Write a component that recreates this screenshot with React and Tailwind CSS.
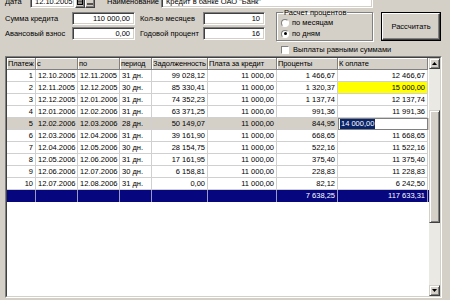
import React from 'react';

const rows = [
  ['1', '12.10.2005', '12.11.2005', '31 дн.', '99 028,12', '11 000,00', '1 466,67', '12 466,67'],
  ['2', '12.11.2005', '12.12.2005', '30 дн.', '85 330,41', '11 000,00', '1 320,37', '15 000,00'],
  ['3', '12.12.2005', '12.01.2006', '31 дн.', '74 352,23', '11 000,00', '1 137,74', '12 137,74'],
  ['4', '12.01.2006', '12.02.2006', '31 дн.', '63 371,25', '11 000,00', '991,36', '11 991,36'],
  ['5', '12.02.2006', '12.03.2006', '28 дн.', '50 149,07', '11 000,00', '844,95', '14 000,00'],
  ['6', '12.03.2006', '12.04.2006', '31 дн.', '39 161,90', '11 000,00', '668,65', '11 668,65'],
  ['7', '12.04.2006', '12.05.2006', '30 дн.', '28 154,75', '11 000,00', '522,16', '11 522,16'],
  ['8', '12.05.2006', '12.06.2006', '31 дн.', '17 161,95', '11 000,00', '375,40', '11 375,40'],
  ['9', '12.06.2006', '12.07.2006', '30 дн.', '6 158,81', '11 000,00', '228,83', '11 228,83'],
  ['10', '12.07.2006', '12.08.2006', '31 дн.', '0,00', '11 000,00', '82,12', '6 242,50'],
];

const headers = ['Платеж', 'с', 'по', 'период', 'Задолженность', 'Плата за кредит', 'Проценты', 'К оплате'];
const leftCols = [1, 2, 3];

const cols = 'grid grid-cols-[29px_42px_42px_32px_56px_69px_61px_90px]';

const Edit = ({ className = '', right, children }) => (
  <div
    className={`h-[13px] bg-white border border-t-[#808080] border-l-[#808080] border-r-white border-b-white shadow-[inset_1px_1px_0_#404040,inset_-1px_-1px_0_#d4d0c8] flex items-center px-[4px] whitespace-nowrap overflow-hidden ${right ? 'justify-end' : ''} ${className}`}
  >
    {children}
  </div>
);

const SmallBtn = ({ children }) => (
  <div className="w-[10px] h-[13px] bg-[#d4d0c8] border border-t-white border-l-white border-r-[#404040] border-b-[#404040] shadow-[inset_-1px_-1px_0_#808080] flex items-center justify-center">
    {children}
  </div>
);

const Radio = ({ checked }) => (
  <span className="w-[8px] h-[8px] rounded-full bg-white border border-t-[#808080] border-l-[#808080] border-r-white border-b-white flex items-center justify-center shrink-0">
    {checked && <span className="w-[3px] h-[3px] rounded-full bg-black" />}
  </span>
);

const ScrollBtn = ({ down }) => (
  <div className="h-[11px] bg-[#d4d0c8] border border-t-[#d4d0c8] border-l-[#d4d0c8] border-r-[#404040] border-b-[#404040] shadow-[inset_1px_1px_0_white,inset_-1px_-1px_0_#808080] flex items-center justify-center">
    <svg width="5" height="3" viewBox="0 0 5 3">
      {down ? <path d="M0 0h5L2.5 3z" fill="#000" /> : <path d="M0 3h5L2.5 0z" fill="#000" />}
    </svg>
  </div>
);

export default function App() {
  return (
    <div className="w-[450px] h-[300px] overflow-hidden bg-[#d4d0c8] text-black text-[7.5px] leading-none font-['Liberation_Sans',Arial,sans-serif]">
      {/* top line, partly cut off */}
      <div className="flex items-center h-[13px] mt-[-5px]">
        <span className="w-[30px] pl-[5px]">Дата</span>
        <Edit className="w-[45px]">12.10.2005</Edit>
        <SmallBtn>
          <svg width="6" height="6" viewBox="0 0 6 6">
            <rect x="0.5" y="0.5" width="5" height="5" fill="none" stroke="#000" strokeWidth="1" />
            <path d="M0 2h6M2 2v4M4 2v4" stroke="#000" strokeWidth="0.7" />
          </svg>
        </SmallBtn>
        <SmallBtn>
          <svg width="6" height="6" viewBox="0 0 6 6">
            <path d="M0 5h6" stroke="#000" strokeWidth="1.2" />
          </svg>
        </SmallBtn>
        <span className="ml-[12px] w-[54px] whitespace-nowrap">Наименование</span>
        <Edit className="w-[212px]">Кредит в банке ОАО "Банк"</Edit>
      </div>

      <div className="flex items-start mt-[4px]">
        <div className="flex flex-col gap-[2px]">
          <div className="flex items-center">
            <span className="w-[72px] pl-[5px] whitespace-nowrap">Сумма кредита</span>
            <Edit className="w-[63px]" right>110 000,00</Edit>
            <span className="w-[68px] pl-[5px] whitespace-nowrap">Кол-во месяцев</span>
            <Edit className="w-[62px]" right>10</Edit>
          </div>
          <div className="flex items-center">
            <span className="w-[72px] pl-[5px] whitespace-nowrap">Авансовый взнос</span>
            <Edit className="w-[63px]" right>0,00</Edit>
            <span className="w-[68px] pl-[5px] whitespace-nowrap">Годовой процент</span>
            <Edit className="w-[62px]" right>16</Edit>
          </div>
        </div>

        <fieldset className="ml-[11px] mt-[-3px] w-[97px] h-[32px] border border-[#808080] shadow-[1px_1px_0_white,inset_1px_1px_0_white] px-[4px]">
          <legend className="ml-[2px] px-[1px] whitespace-nowrap">Расчет процентов</legend>
          <div className="flex flex-col gap-[1px] mt-[1px]">
            <label className="flex items-center gap-[3px] h-[10px]">
              <Radio />
              <span>по месяцам</span>
            </label>
            <label className="flex items-center gap-[3px] h-[10px]">
              <Radio checked />
              <span>по дням</span>
            </label>
          </div>
        </fieldset>

        <div className="ml-[8px] w-[60px] h-[29px] border border-black">
          <div className="w-full h-full bg-[#d4d0c8] border border-t-white border-l-white border-r-[#404040] border-b-[#404040] shadow-[inset_-1px_-1px_0_#808080] flex items-center justify-center">
            Рассчитать
          </div>
        </div>
      </div>

      <label className="flex items-center gap-[4px] mt-[4px] h-[9px] pl-[281px]">
        <span className="w-[8px] h-[8px] bg-white border border-t-[#808080] border-l-[#808080] border-r-white border-b-white shrink-0" />
        <span className="whitespace-nowrap">Выплаты равными суммами</span>
      </label>

      {/* payments grid */}
      <div className="ml-[5px] mt-[2px] w-[437px] h-[242px] border border-t-[#808080] border-l-[#808080] border-r-white border-b-white">
        <div className="w-full h-full border border-t-[#404040] border-l-[#404040] border-r-[#d4d0c8] border-b-[#d4d0c8] flex">
          <div className="flex-1 bg-white">
            <div className={cols}>
              {headers.map((h) => (
                <div
                  key={h}
                  className="h-[12px] bg-[#d4d0c8] border-r border-b border-r-[#808080] border-b-[#808080] shadow-[inset_1px_1px_0_white] pl-[1px] flex items-center overflow-hidden whitespace-nowrap tracking-[-0.1px]"
                >
                  {h}
                </div>
              ))}
            </div>
            {rows.map((r, i) => (
              <div key={r[0]} className={`${cols} ${i === 4 ? 'bg-[#d4d0c8]' : ''}`}>
                {r.map((v, j) => {
                  if (i === 4 && j === 7) {
                    return (
                      <div key={j} className="h-[12px] bg-white border border-[#808080] pl-[1px] flex items-center">
                        <span className="bg-[#0a246a] text-white px-[1px] py-[1px]">{v}</span>
                      </div>
                    );
                  }
                  return (
                    <div
                      key={j}
                      className={`h-[12px] border-r border-b border-[#d0d0d0] flex items-center overflow-hidden whitespace-nowrap ${
                        leftCols.includes(j) ? 'pl-[2px]' : 'justify-end pr-[2px]'
                      } ${i === 1 && j === 7 ? 'bg-[#ffff00]' : ''}`}
                    >
                      {v}
                    </div>
                  );
                })}
              </div>
            ))}
            <div className={`${cols} bg-[#06067e] text-white`}>
              {['', '', '', '', '', '', '7 638,25', '117 633,31'].map((v, j) => (
                <div key={j} className="h-[12px] border-r border-[#9a9ac4] flex items-center justify-end pr-[2px]">
                  {v}
                </div>
              ))}
            </div>
          </div>

          <div className="w-[11px] flex flex-col bg-[#ebe9e3]">
            <ScrollBtn />
            <div className="flex-1 flex flex-col">
              <div className="mt-[41px] h-[113px] bg-[#d4d0c8] border border-t-[#d4d0c8] border-l-[#d4d0c8] border-r-[#404040] border-b-[#404040] shadow-[inset_1px_1px_0_white,inset_-1px_-1px_0_#808080]" />
            </div>
            <ScrollBtn down />
          </div>
        </div>
      </div>
    </div>
  );
}
